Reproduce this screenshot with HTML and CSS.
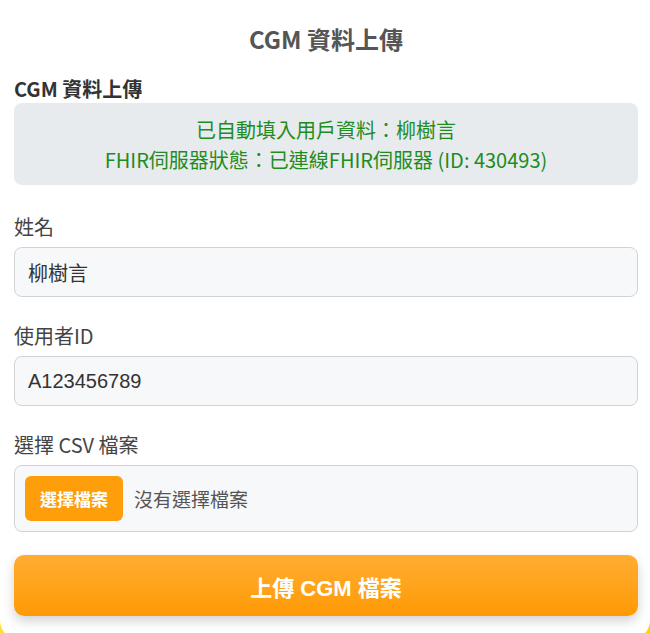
FILE: index.html
```html
<!DOCTYPE html>
<html lang="zh-Hant">
<head>
<meta charset="utf-8">
<title>CGM 資料上傳</title>
<link rel="stylesheet" href="styles.css">
</head>
<body>
<div class="page">
  <main class="card">
    <h1 class="title">CGM 資料上傳</h1>
    <h2 class="subtitle">CGM 資料上傳</h2>
    <div class="status">
      <div>已自動填入用戶資料：柳樹言</div>
      <div>FHIR伺服器狀態：已連線FHIR伺服器 (ID: 430493)</div>
    </div>
    <div class="field">
      <label class="label">姓名</label>
      <input class="input" type="text" value="柳樹言">
    </div>
    <div class="field">
      <label class="label">使用者ID</label>
      <input class="input" type="text" value="A123456789">
    </div>
    <div class="field">
      <label class="label">選擇 CSV 檔案</label>
      <div class="file-box">
        <span class="file-btn">選擇檔案</span>
        <span class="file-name">沒有選擇檔案</span>
      </div>
    </div>
    <button class="upload" type="button">上傳 CGM 檔案</button>
  </main>
</div>
</body>
</html>
```

FILE: styles.css
```css
html, body {
  margin: 0;
  padding: 0;
  height: 633px;
  overflow: hidden;
}
body {
  background: linear-gradient(135deg, #f7d700 0%, #ffe033 50%, #f5d800 100%);
  font-family: "Noto Sans CJK TC", "Noto Sans", sans-serif;
}
.page {
  display: flex;
  flex-direction: column;
}
.card {
  background: #ffffff;
  height: 640px;
  box-sizing: border-box;
  border-radius: 0 0 20px 20px;
  padding: 21px 12px 0 14px;
  display: flex;
  flex-direction: column;
}
.title {
  margin: 0 0 19px;
  text-align: center;
  font-size: 24px;
  line-height: 36px;
  font-weight: 700;
  color: #555555;
}
.subtitle {
  margin: 0 0 1px;
  font-size: 20px;
  line-height: 26px;
  font-weight: 700;
  color: #333333;
}
.status {
  background: #e8ebee;
  border-radius: 8px;
  padding: 12px 10px 10px;
  text-align: center;
  color: #1f8c1f;
  font-size: 20px;
  line-height: 30px;
}
.field {
  display: flex;
  flex-direction: column;
  margin-top: 29px;
}
.field + .field {
  margin-top: 26px;
}
.label {
  font-size: 20px;
  line-height: 26px;
  color: #444444;
  margin-bottom: 7px;
}
.input {
  box-sizing: border-box;
  height: 50px;
  width: 100%;
  border: 1px solid #cfd3d8;
  border-radius: 8px;
  background: #f7f8fa;
  padding: 0 13px;
  font-family: "Liberation Sans", "Noto Sans CJK TC", sans-serif;
  font-size: 20px;
  color: #333333;
  outline: none;
}
.file-box {
  box-sizing: border-box;
  height: 67px;
  border: 1px solid #cfd3d8;
  border-radius: 8px;
  background: #f7f8fa;
  display: flex;
  align-items: center;
  padding: 0 10px;
  gap: 11px;
}
.file-btn {
  background: #ff9e0b;
  color: #ffffff;
  border-radius: 6px;
  height: 45px;
  padding: 0 15px;
  display: flex;
  align-items: center;
  font-family: "Liberation Sans", "Noto Sans CJK TC", sans-serif;
  font-weight: 700;
  font-size: 17px;
}
.file-name {
  font-family: "Liberation Sans", "Noto Sans CJK TC", sans-serif;
  font-size: 19px;
  color: #555555;
}
.upload {
  margin-top: 23px;
  height: 61px;
  width: 100%;
  border: none;
  border-radius: 10px;
  background: linear-gradient(180deg, #ffad33 0%, #ff9a04 100%);
  box-shadow: 0 5px 12px rgba(0, 0, 0, 0.18);
  color: #ffffff;
  font-family: "Liberation Sans", "Noto Sans CJK TC", sans-serif;
  font-weight: 700;
  font-size: 22px;
}
```
